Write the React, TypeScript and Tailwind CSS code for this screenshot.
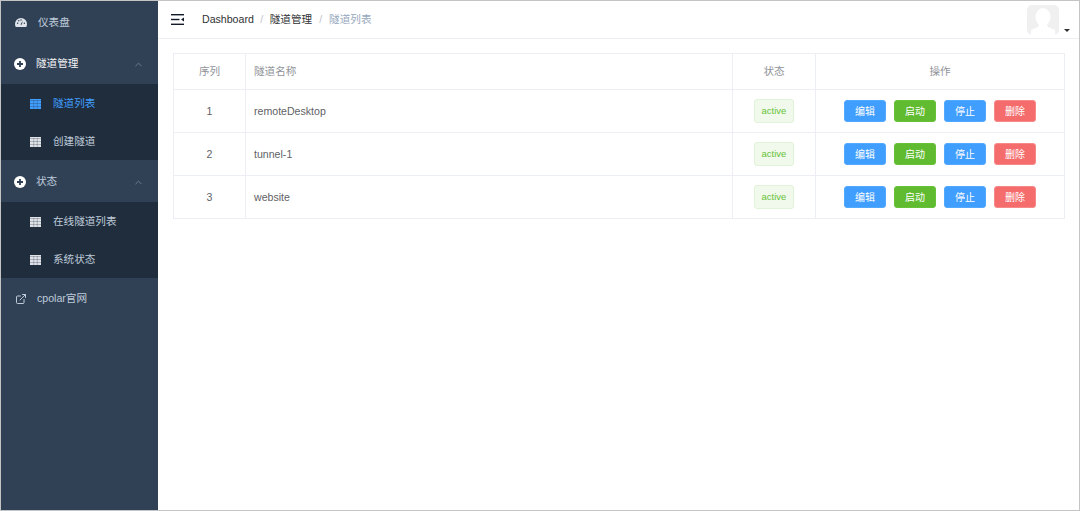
import { ChevronUp, ExternalLink } from "lucide-react";

const tunnels = [
  { id: 1, name: "remoteDesktop" },
  { id: 2, name: "tunnel-1" },
  { id: 3, name: "website" },
];

const GaugeIcon = () => (
  <svg viewBox="0 0 16 12" className="h-[9px] w-[12px]" fill="#dfe4ea">
    <path d="M8 0a8 8 0 0 0-8 8c0 1.500.4 2.800 1 4h14c.6-1.200 1-2.500 1-4a8 8 0 0 0-8-8z" />
    <path d="M7.200 8.500 10.500 3.500 9 9z" fill="#304156" />
    <circle cx="3.500" cy="7" r="1" fill="#304156" />
    <circle cx="5" cy="3.800" r="1" fill="#304156" />
    <circle cx="8" cy="2.500" r="1" fill="#304156" />
    <circle cx="12.500" cy="7" r="1" fill="#304156" />
  </svg>
);

const PlusCircle = () => (
  <svg viewBox="0 0 12 12" className="h-[12px] w-[12px]">
    <circle cx="6" cy="6" r="6" fill="#ffffff" />
    <path d="M6 3v6M3 6h6" stroke="#304156" strokeWidth="1.800" />
  </svg>
);

const GridIcon = ({ active }: { active?: boolean }) => (
  <svg viewBox="0 0 11 10" className="h-[10px] w-[11px]">
    <rect width="11" height="10" fill={active ? "#409eff" : "#dfe3e8"} />
    <path
      d="M3.750 1v9M7.250 1v9M0 1.500h11M0 4.500h11M0 7.500h11"
      stroke="#1f2d3d"
      strokeOpacity="0.55"
      strokeWidth="0.5"
      fill="none"
    />
  </svg>
);

const MenuIcon = () => (
  <svg viewBox="0 0 13 11" className="h-[11px] w-[13px]" fill="#111827">
    <rect width="13" height="1.400" />
    <rect y="4.800" width="8.500" height="1.400" />
    <rect y="9.600" width="13" height="1.400" />
    <path d="M13 3.500v4L10 5.500z" />
  </svg>
);

const Avatar = () => (
  <svg viewBox="0 0 32 30" className="h-[30px] w-[32px]">
    <rect width="32" height="30" rx="5" fill="#f0f0f0" />
    <ellipse cx="16" cy="12" rx="7.500" ry="9" fill="#ffffff" />
    <path d="M12 19h8l1 3 7 3v5H4v-5l7-3z" fill="#ffffff" />
  </svg>
);

const App = () => {
  return (
    <div className="flex h-[511px] w-[1080px] overflow-hidden border border-[#c4c4c4] bg-white font-['Liberation_Sans','Noto_Sans_CJK_SC',sans-serif] text-[10.6px]">
      <aside className="w-[157px] shrink-0 bg-[#304156] text-[#bfcbd9]">
        <div className="flex h-[41px] items-center pl-[14px] pt-[2px]">
          <GaugeIcon />
          <span className="ml-[11px]">仪表盘</span>
        </div>
        <div className="flex h-[42px] items-center pl-[13px] pr-[14px] pt-[2px] text-[#f4f4f5]">
          <PlusCircle />
          <span className="ml-[10px] flex-1">隧道管理</span>
          <ChevronUp className="h-[11px] w-[11px] text-[#6f7f92]" />
        </div>
        <div className="bg-[#1f2d3d]">
          <div className="flex h-[38px] items-center pl-[29px] pt-[2px] text-[#409eff]">
            <GridIcon active />
            <span className="ml-[12px]">隧道列表</span>
          </div>
          <div className="flex h-[38px] items-center pl-[29px] pt-[2px]">
            <GridIcon />
            <span className="ml-[12px]">创建隧道</span>
          </div>
        </div>
        <div className="flex h-[42px] items-center pl-[13px] pr-[14px] pt-[2px]">
          <PlusCircle />
          <span className="ml-[10px] flex-1">状态</span>
          <ChevronUp className="h-[11px] w-[11px] text-[#6f7f92]" />
        </div>
        <div className="bg-[#1f2d3d]">
          <div className="flex h-[38px] items-center pl-[29px] pt-[2px]">
            <GridIcon />
            <span className="ml-[12px]">在线隧道列表</span>
          </div>
          <div className="flex h-[38px] items-center pl-[29px] pt-[2px]">
            <GridIcon />
            <span className="ml-[12px]">系统状态</span>
          </div>
        </div>
        <div className="flex h-[42px] items-center pl-[14px]">
          <ExternalLink className="h-[12px] w-[12px]" />
          <span className="ml-[10px]">cpolar官网</span>
        </div>
      </aside>

      <main className="min-w-0 flex-1">
        <header className="flex h-[38px] items-center border-b border-[#eceef2] pl-[13px] pr-[9px]">
          <MenuIcon />
          <nav className="ml-[18px] flex items-center text-[#303133]">
            <span>Dashboard</span>
            <span className="mx-[6.500px] text-[#c0c4cc]">/</span>
            <span>隧道管理</span>
            <span className="mx-[7px] text-[#c0c4cc]">/</span>
            <span className="text-[#97a8be]">隧道列表</span>
          </nav>
          <div className="ml-auto flex items-end">
            <Avatar />
            <span className="mb-[3px] ml-[5px] h-0 w-0 border-x-[3px] border-t-[3px] border-x-transparent border-t-[#303133]" />
          </div>
        </header>

        <div className="px-[15px] py-[14px]">
          <table className="w-[892px] table-fixed border-collapse border border-[#ebeef5] text-[#606266]">
            <thead>
              <tr className="h-[36px] text-[#909399]">
                <th className="w-[72px] border border-[#ebeef5] font-normal">序列</th>
                <th className="border border-[#ebeef5] pl-[8px] text-left font-normal">隧道名称</th>
                <th className="w-[83px] border border-[#ebeef5] font-normal">状态</th>
                <th className="w-[249px] border border-[#ebeef5] font-normal">操作</th>
              </tr>
            </thead>
            <tbody>
              {tunnels.map((t) => (
                <tr key={t.id} className="h-[43px]">
                  <td className="border border-[#ebeef5] pt-[2px] text-center">{t.id}</td>
                  <td className="border border-[#ebeef5] pl-[8px] pt-[2px]">{t.name}</td>
                  <td className="border border-[#ebeef5] text-center">
                    <span className="inline-flex h-[24px] w-[40px] items-center justify-center rounded-[3px] border border-[#e1f3d8] bg-[#f0f9eb] text-[9.500px] text-[#67c23a]">
                      active
                    </span>
                  </td>
                  <td className="border border-[#ebeef5]">
                    <div className="flex items-center justify-center gap-[8px] text-[10px] text-white">
                      <button className="h-[22px] w-[42px] rounded-[3px] border border-[#53a8ff] bg-[#409eff]">编辑</button>
                      <button className="h-[22px] w-[42px] rounded-[3px] border border-[#67c23a] bg-[#60bb30]">启动</button>
                      <button className="h-[22px] w-[42px] rounded-[3px] border border-[#53a8ff] bg-[#409eff]">停止</button>
                      <button className="h-[22px] w-[42px] rounded-[3px] border border-[#f78989] bg-[#f56c6c]">删除</button>
                    </div>
                  </td>
                </tr>
              ))}
            </tbody>
          </table>
        </div>
      </main>
    </div>
  );
};

export default App;
